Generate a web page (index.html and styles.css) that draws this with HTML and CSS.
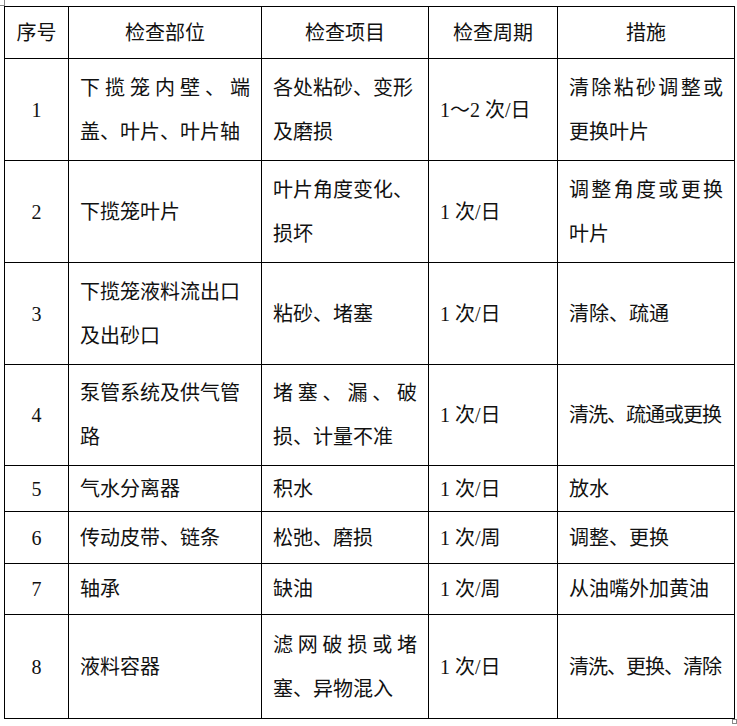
FILE: index.html
```html
<!DOCTYPE html>
<html lang="zh-CN">
<head>
<meta charset="utf-8">
<title>检查表</title>
<link rel="stylesheet" href="styles.css">
</head>
<body>
<div class="page">
  <table class="tbl">
    <colgroup>
      <col class="c1"><col class="c2"><col class="c3"><col class="c4"><col class="c5">
    </colgroup>
    <tr class="h-head">
      <th>序号</th><th>检查部位</th><th>检查项目</th><th>检查周期</th><th>措施</th>
    </tr>
    <tr class="h-big">
      <td class="num">1</td>
      <td><span class="jl">下揽笼内壁、端</span>盖、叶片、叶片轴</td>
      <td>各处粘砂、变形<br>及磨损</td>
      <td>1～2 次/日</td>
      <td><span class="jl">清除粘砂调整或</span>更换叶片</td>
    </tr>
    <tr class="h-big">
      <td class="num">2</td>
      <td>下揽笼叶片</td>
      <td>叶片角度变化、<br>损坏</td>
      <td>1 次/日</td>
      <td><span class="jl">调整角度或更换</span>叶片</td>
    </tr>
    <tr class="h-big">
      <td class="num">3</td>
      <td>下揽笼液料流出口<br>及出砂口</td>
      <td>粘砂、堵塞</td>
      <td>1 次/日</td>
      <td>清除、疏通</td>
    </tr>
    <tr class="h-big4">
      <td class="num">4</td>
      <td>泵管系统及供气管<br>路</td>
      <td><span class="jl">堵塞、漏、破</span>损、计量不准</td>
      <td>1 次/日</td>
      <td class="nw tight">清洗、疏通或更换</td>
    </tr>
    <tr class="h-5">
      <td class="num">5</td>
      <td>气水分离器</td>
      <td>积水</td>
      <td>1 次/日</td>
      <td>放水</td>
    </tr>
    <tr class="h-6">
      <td class="num">6</td>
      <td>传动皮带、链条</td>
      <td>松弛、磨损</td>
      <td>1 次/周</td>
      <td>调整、更换</td>
    </tr>
    <tr class="h-7">
      <td class="num">7</td>
      <td>轴承</td>
      <td>缺油</td>
      <td>1 次/周</td>
      <td>从油嘴外加黄油</td>
    </tr>
    <tr class="h-8">
      <td class="num">8</td>
      <td>液料容器</td>
      <td><span class="jl">滤网破损或堵</span>塞、异物混入</td>
      <td>1 次/日</td>
      <td class="nw tight">清洗、更换、清除</td>
    </tr>
  </table>
  <span class="mark-tl"></span>
  <span class="mark-br"></span>
</div>
</body>
</html>
```

FILE: styles.css
```css
html, body {
  margin: 0;
  padding: 0;
  background: #fff;
}

.page {
  position: relative;
  padding: 6px 0 0 4px;
  width: 737px;
  height: 726px;
  box-sizing: border-box;
}

.tbl {
  border-collapse: collapse;
  table-layout: fixed;
  width: 730px;
  font-family: "Liberation Serif", "Noto Sans CJK SC", serif;
  font-size: 20px;
  color: #111;
}

.c1 { width: 64px; }
.c2 { width: 193px; }
.c3 { width: 167px; }
.c4 { width: 129px; }
.c5 { width: 177px; }

.tbl th,
.tbl td {
  border: 1px solid #000;
  padding: 0 11px 0 11px;
  line-height: 44px;
  vertical-align: middle;
  text-align: left;
  font-weight: normal;
}

.tbl th {
  text-align: center;
}

.tbl td.num {
  text-align: center;
  padding: 0;
}

.h-head { height: 52px; }
.h-big { height: 102px; }
.h-big4 { height: 101px; }
.h-5 { height: 46px; }
.h-6 { height: 52px; }
.h-7 { height: 51px; }
.h-8 { height: 104px; }

.jl {
  display: block;
  text-align: justify;
  text-align-last: justify;
  text-justify: inter-character;
}

.nw { white-space: nowrap; }

.tight {
  letter-spacing: -1px;
  padding-right: 0;
}

.mark-tl {
  position: absolute;
  left: 0;
  top: 0;
  width: 4px;
  height: 5px;
  border-right: 1px solid #888;
  border-bottom: 1px solid #888;
}

.mark-br {
  position: absolute;
  left: 732px;
  top: 719px;
  width: 5px;
  height: 5px;
  border: 1px solid #888;
  box-sizing: border-box;
}
```
